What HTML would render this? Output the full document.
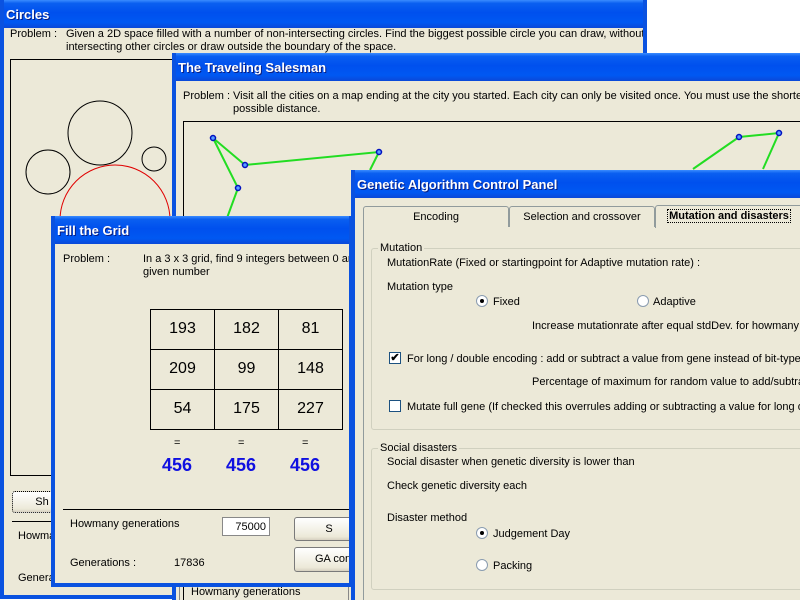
<!DOCTYPE html>
<html style="overflow:hidden;width:800px;height:600px"><head><style>
*{margin:0;padding:0;box-sizing:border-box}
body{width:800px;height:600px;overflow:hidden;background:#fff;font-family:"Liberation Sans",sans-serif;font-size:11px;color:#000;position:relative}
.win{position:absolute;background:#ECE9D8;border:4px solid #0A52E0;border-top:none;overflow:hidden}
.tb{position:absolute;left:0;right:0;top:0;height:28px;background:linear-gradient(#3A8CFF,#0A5FF0 12%,#0050EE 45%,#0058F2 80%,#0A48D8);color:#fff;font-weight:bold;font-size:13px;padding:7px 0 0 2px;text-shadow:1px 1px #0A1E80}
.a{position:absolute;white-space:nowrap}
.box{position:absolute;border:1px solid #000}
.btn{position:absolute;border:1px solid #7A7A7A;background:linear-gradient(#fff,#ECE9D8 85%,#D6D0C0);border-radius:3px;text-align:center}
.grp{position:absolute;border:1px solid #D0D0BF;border-radius:3px}
.gl{position:absolute;top:-7px;left:6px;background:#ECE9D8;padding:0 2px}
.rad{position:absolute;width:12px;height:12px;border-radius:50%;border:1px solid #8A9CB0;background:#fff}
.rad.on::after{content:"";position:absolute;left:3px;top:3px;width:4px;height:4px;border-radius:50%;background:#000}
.chk{position:absolute;width:12px;height:12px;border:1px solid #1C5180;background:#fff}
</style></head><body>

<!-- Circles window -->
<div class="win" style="left:0;top:0;width:647px;height:599px">
 <div class="tb">Circles</div>
 <div class="a" style="left:6px;top:28px">Problem :</div>
 <div class="a" style="left:62px;top:28px;line-height:13px">Given a 2D space filled with a number of non-intersecting circles. Find the biggest possible circle you can draw, without<br>intersecting other circles or draw outside the boundary of the space.</div>
 <div class="box" style="left:6px;top:59px;width:170px;height:417px"></div>
 <svg class="a" style="left:-4px;top:0" width="180" height="300">
  <circle cx="100" cy="133" r="32" fill="none" stroke="#000"/>
  <circle cx="48" cy="172" r="22" fill="none" stroke="#000"/>
  <circle cx="154" cy="159" r="12" fill="none" stroke="#000"/>
  <circle cx="115" cy="220" r="55" fill="none" stroke="#e00000"/>
 </svg>
 <div class="btn" style="left:8px;top:491px;width:60px;height:22px;padding-top:4px;border:1px dotted #000">Sh</div>
 <div class="a" style="left:8px;top:521px;width:170px;border-top:1px solid #000"></div>
 <div class="a" style="left:14px;top:530px">Howma</div>
 <div class="a" style="left:14px;top:572px">Genera</div>
</div>

<!-- TSP window -->
<div class="win" style="left:172px;top:53px;width:632px;height:550px;border-bottom:none">
 <div class="tb">The Traveling Salesman</div>
 <div class="a" style="left:7px;top:37px;line-height:13px">Problem :</div>
 <div class="a" style="left:57px;top:37px;line-height:13px">Visit all the cities on a map ending at the city you started. Each city can only be visited once. You must use the shortest<br>possible distance.</div>
 <div class="box" style="left:7px;top:68px;width:640px;height:480px;border-bottom:none"></div>
 <div class="a" style="left:15px;top:533px">Howmany generations</div>
 <div class="box" style="left:3px;top:530px;width:170px;height:30px;border-color:#888"></div>
</div>
<svg class="a" style="left:0;top:0" width="800" height="300">
 <g stroke="#22dd22" stroke-width="2" fill="none">
  <polyline points="227,218 238,188 213,138 245,165 379,152 370,170"/>
  <polyline points="693,169 739,137 779,133 763,169"/>
 </g>
 <g stroke="#0010c0" stroke-width="1.5" fill="#5aa0ff">
  <circle cx="213" cy="138" r="2.5"/><circle cx="245" cy="165" r="2.5"/><circle cx="238" cy="188" r="2.5"/><circle cx="379" cy="152" r="2.5"/><circle cx="739" cy="137" r="2.5"/><circle cx="779" cy="133" r="2.5"/>
 </g>
</svg>

<!-- Fill the grid -->
<div class="win" style="left:51px;top:216px;width:302px;height:371px">
 <div class="tb">Fill the Grid</div>
 <div class="a" style="left:8px;top:37px">Problem :</div>
 <div class="a" style="left:88px;top:37px;line-height:13px">In a 3 x 3 grid, find 9 integers between 0 and<br>given number</div>
 <div class="a" style="left:95px;top:93px;width:193px;height:121px;border:1px solid #000;display:grid;grid-template-columns:64px 64px 63px;grid-template-rows:40px 40px 39px;font-size:16px;text-align:center;line-height:38px">
  <div style="border-right:1px solid #000;border-bottom:1px solid #000">193</div><div style="border-right:1px solid #000;border-bottom:1px solid #000">182</div><div style="border-bottom:1px solid #000">81</div>
  <div style="border-right:1px solid #000;border-bottom:1px solid #000">209</div><div style="border-right:1px solid #000;border-bottom:1px solid #000">99</div><div style="border-bottom:1px solid #000">148</div>
  <div style="border-right:1px solid #000">54</div><div style="border-right:1px solid #000">175</div><div>227</div>
 </div>
 <div class="a" style="left:119px;top:221px">=</div><div class="a" style="left:183px;top:221px">=</div><div class="a" style="left:247px;top:221px">=</div>
 <div class="a" style="left:107px;top:239px;font-size:18px;font-weight:bold;color:#1010e0">456</div>
 <div class="a" style="left:171px;top:239px;font-size:18px;font-weight:bold;color:#1010e0">456</div>
 <div class="a" style="left:235px;top:239px;font-size:18px;font-weight:bold;color:#1010e0">456</div>
 <div class="a" style="left:8px;top:293px;width:300px;border-top:1px solid #000"></div>
 <div class="a" style="left:15px;top:302px">Howmany generations</div>
 <div class="a" style="left:167px;top:301px;width:48px;height:19px;background:#fff;border:1px solid #888;text-align:right;padding:3px 3px 0 0">75000</div>
 <div class="btn" style="left:239px;top:301px;width:70px;height:24px;padding-top:5px">S</div>
 <div class="btn" style="left:239px;top:331px;width:70px;height:25px;padding-top:5px;text-align:left;padding-left:20px">GA con</div>
 <div class="a" style="left:15px;top:341px">Generations :</div>
 <div class="a" style="left:119px;top:341px">17836</div>
</div>

<!-- GA panel -->
<div class="win" style="left:351px;top:170px;width:453px;height:430px;border-right:none;border-bottom:none">
 <div class="tb">Genetic Algorithm Control Panel</div>
 <div class="a" style="left:8px;top:56px;width:460px;height:380px;border:1px solid #919B9C;background:#ECE9D8"></div>
 <div class="a" style="left:8px;top:36px;width:146px;height:21px;border:1px solid #919B9C;border-bottom:none;border-radius:3px 3px 0 0;background:#ECE9D8;text-align:center;padding-top:4px">Encoding</div>
 <div class="a" style="left:154px;top:36px;width:146px;height:21px;border:1px solid #919B9C;border-bottom:none;border-radius:3px 3px 0 0;background:#ECE9D8;text-align:center;padding-top:4px">Selection and crossover</div>
 <div class="a" style="left:300px;top:35px;width:148px;height:23px;border:1px solid #919B9C;border-bottom:none;border-radius:3px 3px 0 0;background:#ECE9D8;text-align:center;padding-top:4px;font-weight:bold"><span style="border:1px dotted #000;padding:0 1px">Mutation and disasters</span></div>
 <div class="grp" style="left:16px;top:78px;width:460px;height:182px"><span class="gl">Mutation</span></div>
 <div class="a" style="left:32px;top:87px">MutationRate (Fixed or startingpoint for Adaptive mutation rate) :</div>
 <div class="a" style="left:32px;top:111px">Mutation type</div>
 <div class="rad on" style="left:121px;top:125px"></div><div class="a" style="left:138px;top:126px">Fixed</div>
 <div class="rad" style="left:282px;top:125px"></div><div class="a" style="left:298px;top:126px">Adaptive</div>
 <div class="a" style="left:177px;top:150px">Increase mutationrate after equal stdDev. for howmany generations</div>
 <div class="chk" style="left:34px;top:182px;font-size:11px;line-height:10px;text-align:center;font-weight:bold">✔</div><div class="a" style="left:52px;top:183px">For long / double encoding : add or subtract a value from gene instead of bit-type mutation</div>
 <div class="a" style="left:177px;top:206px">Percentage of maximum for random value to add/subtract</div>
 <div class="chk" style="left:34px;top:230px"></div><div class="a" style="left:52px;top:231px">Mutate full gene (If checked this overrules adding or subtracting a value for long or double</div>
 <div class="grp" style="left:16px;top:278px;width:460px;height:142px"><span class="gl">Social disasters</span></div>
 <div class="a" style="left:32px;top:286px">Social disaster when genetic diversity is lower than</div>
 <div class="a" style="left:32px;top:310px">Check genetic diversity each</div>
 <div class="a" style="left:32px;top:342px">Disaster method</div>
 <div class="rad on" style="left:121px;top:357px"></div><div class="a" style="left:138px;top:358px">Judgement Day</div>
 <div class="rad" style="left:121px;top:389px"></div><div class="a" style="left:138px;top:390px">Packing</div>
</div>
</body></html>
